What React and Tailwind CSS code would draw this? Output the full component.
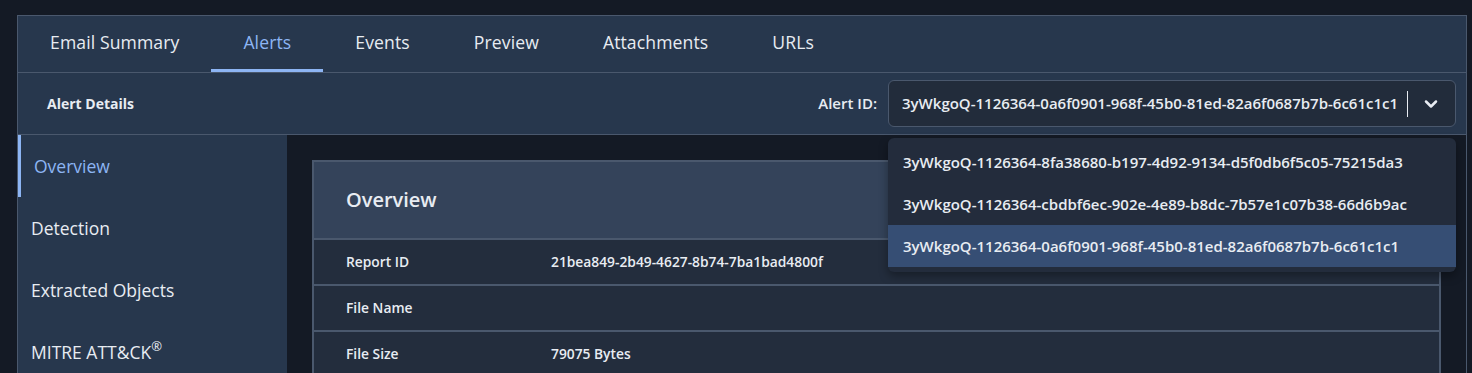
import { ChevronDown } from 'lucide-react';

const TABS = ['Email Summary', 'Alerts', 'Events', 'Preview', 'Attachments', 'URLs'];
const SIDE = ['Overview', 'Detection', 'Extracted Objects', 'MITRE ATT&CK'];
const ALERT_IDS = [
  '3yWkgoQ-1126364-8fa38680-b197-4d92-9134-d5f0db6f5c05-75215da3',
  '3yWkgoQ-1126364-cbdbf6ec-902e-4e89-b8dc-7b57e1c07b38-66d6b9ac',
  '3yWkgoQ-1126364-0a6f0901-968f-45b0-81ed-82a6f0687b7b-6c61c1c1',
];
const ROWS = [
  { label: 'Report ID', value: '21bea849-2b49-4627-8b74-7ba1bad4800f' },
  { label: 'File Name', value: '' },
  { label: 'File Size', value: '79075 Bytes' },
];

export default function App() {
  const selected = ALERT_IDS[2];

  return (
    <div
      className="h-[373px] overflow-hidden bg-[#141a25] pl-[17px] pt-[15px] text-[#e8ecf2]"
      style={{ fontFamily: '"Open Sans", "Noto Sans", sans-serif' }}
    >
      <div className="w-[1450px] h-[400px] border border-[#4a586d] bg-[#27374d] flex flex-col">
        {/* tabs */}
        <div className="flex h-[57px] border-b border-[#4a586d]">
          {TABS.map((t) => (
            <div
              key={t}
              className={`px-[32px] flex items-center text-[17.6px] tracking-[0.1px] border-b-[3px] ${
                t === 'Alerts' ? 'text-[#8db5f4] border-[#8db5f4]' : 'border-transparent'
              }`}
            >
              {t}
            </div>
          ))}
        </div>

        {/* alert details bar */}
        <div className="flex items-center h-[62px] border-b border-[#4a586d] pl-[29px] pr-[10px]">
          <span className="text-[14px] font-bold">Alert Details</span>
          <span className="ml-auto mr-[11px] text-[15px] font-semibold">Alert ID:</span>
          <div className="relative">
            <div className="w-[568px] h-[47px] rounded-md border border-[#4a586d] bg-[#222c3b] flex items-center pl-[13px] pr-[14px]">
              <span className="text-[15px] font-semibold truncate">{selected}</span>
              <span className="ml-auto w-px h-[26px] bg-[#e8ecf2]" />
              <ChevronDown size={20} strokeWidth={3} className="ml-[13px] text-[#e8ecf2]" />
            </div>
            <div className="absolute left-0 top-[58px] z-10 w-[568px] rounded-md bg-[#232c3c] pt-[3px] pb-[5px] shadow-[0_4px_10px_rgba(0,0,0,0.35)]">
              {ALERT_IDS.map((id) => (
                <div
                  key={id}
                  className={`h-[42px] flex items-center px-[15px] text-[15px] font-semibold ${
                    id === selected ? 'bg-[#364e74]' : ''
                  }`}
                >
                  {id}
                </div>
              ))}
            </div>
          </div>
        </div>

        {/* body */}
        <div className="flex flex-1">
          <div className="w-[269px] shrink-0 flex flex-col">
            {SIDE.map((s, i) => (
              <div
                key={s}
                className={`h-[62px] flex items-center text-[17.5px] ${
                  i === 0 ? 'border-l-[3px] border-[#8db5f4] pl-[13px] text-[#8db5f4]' : 'pl-[13px]'
                }`}
              >
                {s}
                {s === 'MITRE ATT&CK' && <sup className="text-[13px] -top-[6px]">®</sup>}
              </div>
            ))}
          </div>
          <div className="flex-1 bg-[#141a25] p-[25px]">
            <div className="border-2 border-[#4a586d] bg-[#232d3d]">
              <div className="h-[76px] bg-[#34435a] flex items-center pl-[32px] text-[20px] font-semibold">
                Overview
              </div>
              {ROWS.map((r) => (
                <div key={r.label} className="h-[46px] border-t-2 border-[#4a586d] flex items-center pl-[32px] text-[13.8px] font-semibold">
                  <span className="w-[205px]">{r.label}</span>
                  <span>{r.value}</span>
                </div>
              ))}
            </div>
          </div>
        </div>
      </div>
    </div>
  );
}
